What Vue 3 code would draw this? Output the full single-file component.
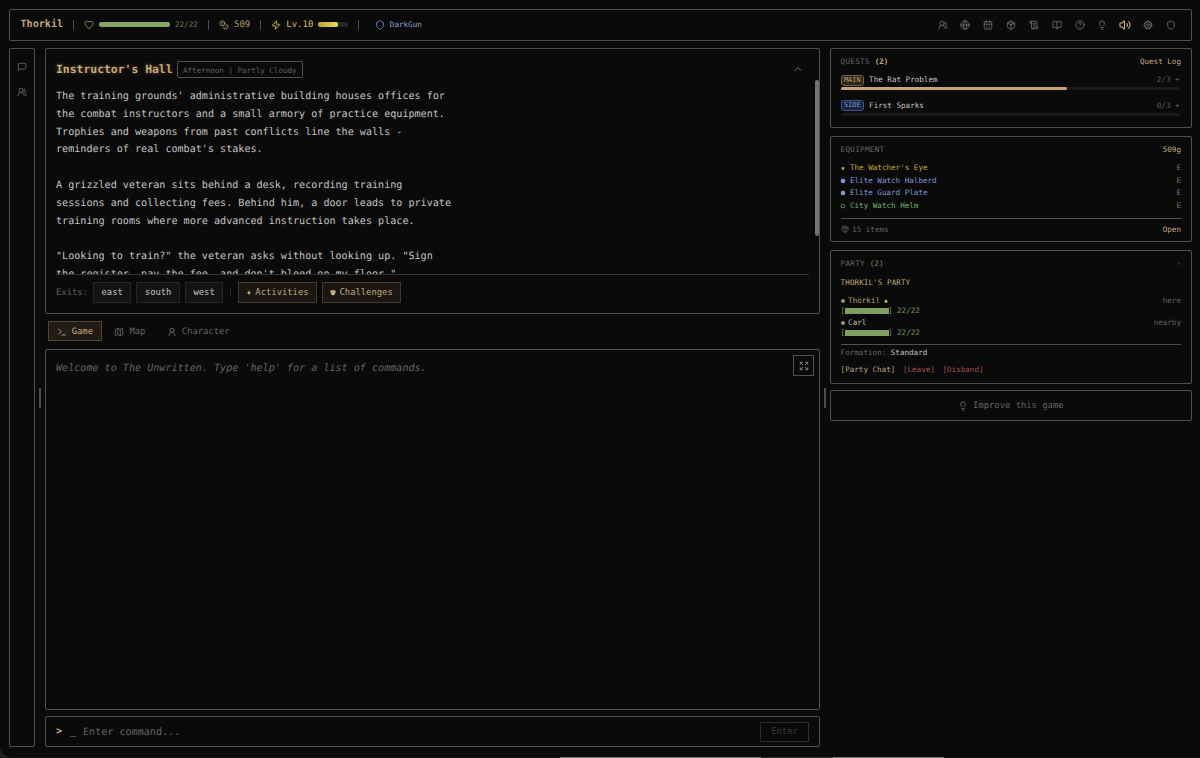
<template>
  <div class="screen">
    <div class="game">
      <!-- TOP BAR -->
      <header class="panel topbar">
        <span class="player">Thorkil</span>
        <span class="sep"></span>
        <svg class="icon hp" viewBox="0 0 24 24" v-html="icons.heart"></svg>
        <div class="hp-track"></div>
        <span class="hp-text">22/22</span>
        <span class="sep"></span>
        <svg class="icon coins" viewBox="0 0 24 24" v-html="icons.coins"></svg>
        <span class="gold">509</span>
        <span class="sep"></span>
        <svg class="icon zap" viewBox="0 0 24 24" v-html="icons.zap"></svg>
        <span class="level">Lv.10</span>
        <div class="xp-track"><div class="xp-fill" :style="{ width: xp + '%' }"></div></div>
        <span class="sep"></span>
        <svg class="icon guild" viewBox="0 0 24 24" v-html="icons.shield"></svg>
        <span class="guild-name">DarkGun</span>

        <nav class="toolbar">
          <svg
            v-for="name in toolbar"
            :key="name"
            class="icon"
            :class="{ lit: name === 'volume' }"
            viewBox="0 0 24 24"
            v-html="icons[name]"
          ></svg>
        </nav>
      </header>

      <div class="columns">
        <!-- SIDE RAIL -->
        <aside class="panel rail">
          <svg class="icon" viewBox="0 0 24 24" v-html="icons.message"></svg>
          <svg class="icon" viewBox="0 0 24 24" v-html="icons.users"></svg>
        </aside>
        <div class="handle"></div>

        <!-- MAIN -->
        <main class="main">
          <section class="panel room">
            <div class="room-head">
              <h1>Instructor's Hall</h1>
              <span class="weather">Afternoon | Partly Cloudy</span>
              <svg class="icon chevron" viewBox="0 0 24 24" v-html="icons.chevron"></svg>
            </div>
            <div class="description">{{ description }}</div>
            <div class="scroll-thumb"></div>
            <div class="exits">
              <span class="exits-label">Exits:</span>
              <button v-for="exit in exits" :key="exit" class="btn">{{ exit }}</button>
              <span class="exits-sep"></span>
              <button class="btn gold-btn">
                <svg class="mark" viewBox="0 0 6 8"><path d="M3 2.3 3.8 4 5.200 4.800 3.800 5.600 3 7.200 2.200 5.600.8 4.800 2.200 4z" /></svg>Activities
              </button>
              <button class="btn gold-btn">
                <svg class="mark" viewBox="0 0 6 8"><path d="M.5 2.200h5v2.600Q5.300 6.800 3 7.600.7 6.800.5 4.800z" /></svg>Challenges
              </button>
            </div>
          </section>

          <div class="tabs">
            <a
              v-for="tab in tabs"
              :key="tab.name"
              class="tab"
              :class="{ active: activeTab === tab.name }"
              @click="activeTab = tab.name"
            >
              <svg class="icon" viewBox="0 0 24 24" v-html="icons[tab.icon]"></svg>
              {{ tab.name }}
            </a>
          </div>

          <section class="panel log">
            <p>Welcome to The Unwritten. Type 'help' for a list of commands.</p>
            <button class="expand">
              <svg class="icon" viewBox="0 0 24 24" v-html="icons.expand"></svg>
            </button>
          </section>

          <section class="panel command">
            <span class="prompt">&gt;</span>
            <span class="cursor">_</span>
            <span class="placeholder">Enter command...</span>
            <button class="enter">Enter</button>
          </section>
        </main>
        <div class="handle right"></div>

        <!-- RIGHT COLUMN -->
        <div class="side">
          <section class="panel quests">
            <div class="head">
              <span class="label">QUESTS <b>(2)</b></span>
              <span class="link">Quest Log</span>
            </div>
            <div v-for="quest in quests" :key="quest.name" class="quest">
              <div class="quest-row">
                <span class="tag" :class="quest.type">{{ quest.type.toUpperCase() }}</span>
                <span class="quest-name">{{ quest.name }}</span>
                <span class="quest-count">{{ quest.done }}/{{ quest.total }} +</span>
              </div>
              <div class="quest-track">
                <div class="quest-fill" :style="{ width: (quest.done / quest.total) * 100 + '%' }"></div>
              </div>
            </div>
          </section>

          <section class="panel equipment">
            <div class="head">
              <span class="label">EQUIPMENT</span>
              <span class="link">509g</span>
            </div>
            <div v-for="item in items" :key="item.name" class="item" :class="item.rarity">
              <svg class="bullet" viewBox="0 0 6 6" v-html="bullets[item.rarity]"></svg>
              <span>{{ item.name }}</span>
              <span class="equipped">E</span>
            </div>
            <div class="bag">
              <svg class="icon" viewBox="0 0 24 24" v-html="icons.package"></svg>
              <span>15 items</span>
              <span class="link">Open</span>
            </div>
          </section>

          <section class="panel party">
            <div class="head">
              <span class="label">PARTY <b>(2)</b></span>
              <span class="minus">-</span>
            </div>
            <div class="party-title">THORKIL'S PARTY</div>
            <div v-for="member in members" :key="member.name" class="member">
              <div class="member-row">
                <span class="dot"></span>
                <span :class="{ leader: member.leader }">{{ member.name }}</span>
                <svg v-if="member.leader" class="star" viewBox="0 0 6 6" v-html="bullets.legendary"></svg>
                <span class="where">{{ member.where }}</span>
              </div>
              <div class="member-hp">[<i></i>]<span>22/22</span></div>
            </div>
            <div class="formation">Formation: <span>Standard</span></div>
            <div class="actions">
              <a>[Party Chat]</a>
              <a class="danger">[Leave]</a>
              <a class="danger">[Disband]</a>
            </div>
          </section>

          <section class="panel improve">
            <svg class="icon" viewBox="0 0 24 24" v-html="icons.bulb"></svg>
            <span>Improve this game</span>
          </section>
        </div>
      </div>
    </div>
    <div class="dock"></div>
  </div>
</template>

<script setup>
import { ref } from 'vue'

const xp = 64
const activeTab = ref('Game')
const exits = ['east', 'south', 'west']

const description = `The training grounds' administrative building houses offices for
the combat instructors and a small armory of practice equipment.
Trophies and weapons from past conflicts line the walls -
reminders of real combat's stakes.

A grizzled veteran sits behind a desk, recording training
sessions and collecting fees. Behind him, a door leads to private
training rooms where more advanced instruction takes place.

"Looking to train?" the veteran asks without looking up. "Sign
the register, pay the fee, and don't bleed on my floor."`

const tabs = [
  { name: 'Game', icon: 'terminal' },
  { name: 'Map', icon: 'map' },
  { name: 'Character', icon: 'user' }
]

const toolbar = ['users', 'globe', 'calendar', 'package', 'scroll', 'book', 'help', 'bulb', 'volume', 'settings', 'shield']

const quests = [
  { type: 'main', name: 'The Rat Problem', done: 2, total: 3 },
  { type: 'side', name: 'First Sparks', done: 0, total: 3 }
]

const items = [
  { name: "The Watcher's Eye", rarity: 'legendary' },
  { name: 'Elite Watch Halberd', rarity: 'rare' },
  { name: 'Elite Guard Plate', rarity: 'rare' },
  { name: 'City Watch Helm', rarity: 'uncommon' }
]

const members = [
  { name: 'Thorkil', leader: true, where: 'here' },
  { name: 'Carl', leader: false, where: 'nearby' }
]

const bullets = {
  legendary: '<path fill="currentColor" d="M3 1.2 3.600 2.500 5 2.700 4 3.700 4.200 5.100 3 4.400 1.800 5.100 2 3.700 1 2.700 2.400 2.500z"/>',
  rare: '<circle cx="3" cy="3" r="2.300" fill="currentColor"/>',
  uncommon: '<circle cx="3" cy="3" r="1.900" fill="none" stroke="currentColor" stroke-width=".7"/>'
}

const icons = {
  heart: '<path d="M19 14c1.490-1.460 3-3.210 3-5.500A5.500 5.500 0 0 0 16.500 3c-1.760 0-3 .5-4.500 2-1.500-1.500-2.740-2-4.500-2A5.500 5.500 0 0 0 2 8.500c0 2.300 1.500 4.050 3 5.500l7 7z"/>',
  coins: '<circle cx="8" cy="8" r="6"/><path d="M18.090 10.370A6 6 0 1 1 10.340 18M7 6h1v4M16.710 13.880l.7.710-2.820 2.820"/>',
  zap: '<path d="M4 14a1 1 0 0 1-.78-1.630l9.900-10.200a.5.5 0 0 1 .86.460l-1.920 6.020A1 1 0 0 0 13 10h7a1 1 0 0 1 .78 1.630l-9.900 10.200a.5.5 0 0 1-.86-.460l1.920-6.020A1 1 0 0 0 11 14z"/>',
  shield: '<path d="M20 13c0 5-3.500 7.500-7.660 8.950a1 1 0 0 1-.67-.010C7.500 20.500 4 18 4 13V6a1 1 0 0 1 1-1c2 0 4.500-1.200 6.240-2.720a1.170 1.170 0 0 1 1.520 0C14.510 3.810 17 5 19 5a1 1 0 0 1 1 1z"/>',
  users: '<path d="M18 21a8 8 0 0 0-16 0"/><circle cx="10" cy="8" r="5"/><path d="M22 20c0-3.370-2-6.500-4-8a5 5 0 0 0-.45-8.300"/>',
  globe: '<circle cx="12" cy="12" r="10"/><path d="M12 2a14.500 14.500 0 0 0 0 20 14.500 14.500 0 0 0 0-20M2 12h20"/>',
  calendar: '<path d="M8 2v4M16 2v4M3 10h18M8 14h.01M12 14h.01M16 14h.01M8 18h.01M12 18h.01M16 18h.01"/><rect width="18" height="18" x="3" y="4" rx="2"/>',
  package: '<path d="M11 21.730a2 2 0 0 0 2 0l7-4A2 2 0 0 0 21 16V8a2 2 0 0 0-1-1.730l-7-4a2 2 0 0 0-2 0l-7 4A2 2 0 0 0 3 8v8a2 2 0 0 0 1 1.730zM12 22V12M3.300 7l8.700 5 8.700-5M7.500 4.270l9 5.150"/>',
  scroll: '<path d="M15 12h-5M15 8h-5M19 17V5a2 2 0 0 0-2-2H4"/><path d="M8 21h12a2 2 0 0 0 2-2v-1a1 1 0 0 0-1-1H11a1 1 0 0 0-1 1v1a2 2 0 1 1-4 0V5a2 2 0 1 0-4 0v2a1 1 0 0 0 1 1h3"/>',
  book: '<path d="M12 7v14M3 18a1 1 0 0 1-1-1V4a1 1 0 0 1 1-1h5a4 4 0 0 1 4 4 4 4 0 0 1 4-4h5a1 1 0 0 1 1 1v13a1 1 0 0 1-1 1h-6a3 3 0 0 0-3 3 3 3 0 0 0-3-3z"/>',
  help: '<circle cx="12" cy="12" r="10"/><path d="M9.090 9a3 3 0 0 1 5.830 1c0 2-3 3-3 3M12 17h.01"/>',
  bulb: '<path d="M15 14c.2-1 .7-1.700 1.500-2.500 1-.9 1.500-2.200 1.500-3.500A6 6 0 0 0 6 8c0 1 .2 2.200 1.500 3.500.7.7 1.300 1.500 1.500 2.500M9 18h6M10 22h4"/>',
  volume: '<path d="M11 4.700a.7.7 0 0 0-1.200-.5L6.410 7.590A1.400 1.400 0 0 1 5.420 8H3a1 1 0 0 0-1 1v6a1 1 0 0 0 1 1h2.420a1.400 1.400 0 0 1 .99.410l3.390 3.390a.7.7 0 0 0 1.200-.5zM16 9a5 5 0 0 1 0 6M19.360 18.360a9 9 0 0 0 0-12.730"/>',
  settings: '<circle cx="12" cy="12" r="8"/><circle cx="12" cy="12" r="3"/><path d="M12 2v2M12 20v2M2 12h2M20 12h2M5 5l1.400 1.400M17.600 17.600 19 19M5 19l1.400-1.400M17.600 6.400 19 5M8.200 2.800l.8 1.700M15 19.500l.8 1.700M2.800 15.800l1.700-.8M19.500 9l1.700-.8M2.800 8.200l1.700.8M19.500 15l1.700.8M8.200 21.200l.8-1.700M15 4.500l.8-1.700"/>',
  message: '<path d="M21 15a2 2 0 0 1-2 2H7l-4 4V5a2 2 0 0 1 2-2h14a2 2 0 0 1 2 2z"/>',
  chevron: '<path d="m5 15.500 7-7 7 7"/>',
  terminal: '<path d="m4 17 6-6-6-6M12 19h8"/>',
  map: '<path d="M14.110 5.550a2 2 0 0 0 1.780 0l3.660-1.830A1 1 0 0 1 21 4.620v12.760a1 1 0 0 1-.55.9l-4.560 2.270a2 2 0 0 1-1.780 0l-4.220-2.110a2 2 0 0 0-1.780 0l-3.660 1.830A1 1 0 0 1 3 19.380V6.620a1 1 0 0 1 .55-.9l4.560-2.270a2 2 0 0 1 1.780 0zM15 5.760v15M9 3.240v15"/>',
  user: '<circle cx="12" cy="8" r="5"/><path d="M19 21v-1a7 7 0 0 0-14 0v1"/>',
  expand: '<path d="m15 15 6 6M15 9l6-6M21 16v5h-5M21 8V3h-5M3 16v5h5M3 21l6-6M3 8V3h5M9 9 3 3"/>'
}
</script>

<style>
body {
  margin: 0;
  background: #24211f;
  overflow: hidden;
}
</style>

<style scoped>
* {
  box-sizing: border-box;
}

.screen {
  height: 758px;
  font-family: 'DejaVu Sans Mono', 'Liberation Mono', monospace;
  font-size: 7.58px;
  line-height: 12px;
  color: #c4c4c4;
  white-space: nowrap;
  text-rendering: geometricPrecision;
}

.game {
  height: 757px;
  padding: 9px 8px 10px 9px;
  display: flex;
  flex-direction: column;
  gap: 7px;
  background: #0a0a0a;
  border-bottom-left-radius: 11px;
}

/* strip of whatever sits under the window */
.dock {
  height: 1px;
  background: linear-gradient(90deg, #171412 560px, #777 560px 761px, #333 761px 833px, #777 833px 944px, #1b1715 944px);
}

.panel {
  border: 1px solid #505050;
  border-radius: 2px;
}

.icon {
  width: 10px;
  height: 10px;
  flex: none;
  fill: none;
  stroke: currentColor;
  stroke-width: 2.2;
  stroke-linecap: round;
  stroke-linejoin: round;
}

button {
  font: inherit;
  color: inherit;
  background: none;
  padding: 0;
  margin: 0;
}

/* TOP BAR */
.topbar {
  height: 32px;
  flex: none;
  display: flex;
  align-items: center;
  padding: 0 15px 1px 10.500px;
}

.player {
  width: 42.500px;
  padding-top: 1px;
  font-size: 10.100px;
  font-weight: bold;
  color: #c4a77a;
}

.sep {
  width: 1px;
  height: 10px;
  margin: 0 10px;
  background: #4b4b4b;
}

.hp {
  color: #7d9b60;
}

.hp-track {
  width: 71px;
  height: 5px;
  margin: 0 5px;
  border-radius: 2px;
  background: #86a566;
}

.hp-text {
  width: 23px;
  padding-top: 1px;
  color: #6b8056;
}

.coins {
  color: #a98f68;
}

.gold,
.level {
  margin-left: 5px;
  font-size: 9px;
  color: #b0966c;
}

.zap,
.level {
  color: #d2bd4a;
}

.xp-track {
  width: 30px;
  height: 5px;
  margin-left: 5px;
  border-radius: 2px;
  background: #262626;
}

.xp-fill {
  height: 100%;
  border-radius: 2px;
  background: linear-gradient(90deg, #bda02f, #efd75c);
}

.guild {
  margin-left: 5.500px;
  color: #7088c8;
}

.guild-name {
  margin-left: 5px;
  padding-top: 1px;
  color: #8ea0d4;
}

.toolbar {
  margin-left: auto;
  display: flex;
  gap: 12.850px;
  color: #6a6a6a;
}

.toolbar .lit {
  color: #d0b27e;
  width: 12px;
  height: 12px;
  margin: -1px;
}

/* COLUMNS */
.columns {
  flex: 1;
  min-height: 0;
  display: flex;
}

.rail {
  width: 26px;
  padding-top: 13px;
  display: flex;
  flex-direction: column;
  align-items: center;
  gap: 15px;
  color: #646464;
}

.handle {
  width: 2px;
  height: 20px;
  margin: 340px 4px 0;
  background: #4c4c4c;
}

.main {
  width: 775px;
  display: flex;
  flex-direction: column;
}

/* ROOM */
.room {
  position: relative;
  height: 266px;
  flex: none;
  padding: 0 10px;
}

.room-head {
  display: flex;
  align-items: center;
  height: 31px;
  padding-top: 9px;
}

h1 {
  margin: 0;
  width: 121px;
  font-size: 11.400px;
  line-height: 18px;
  color: #c8ab7b;
  text-shadow: 0 0 5px rgba(212, 165, 90, 0.4);
}

.weather {
  height: 17px;
  padding: 1px 5px 0;
  line-height: 15px;
  letter-spacing: -0.020px;
  color: #606060;
  border: 1px solid #505050;
  border-radius: 2px;
}

.chevron {
  margin-left: auto;
  margin-right: 6px;
  color: #777;
}

.description {
  height: 195px;
  padding-top: 8.200px;
  overflow: hidden;
  white-space: pre;
  font-size: 10.100px;
  line-height: 17.760px;
  border-bottom: 1px solid #353535;
}

.scroll-thumb {
  position: absolute;
  top: 31px;
  right: 0;
  width: 4px;
  height: 156px;
  border-radius: 2px;
  background: #737373;
}

.exits {
  display: flex;
  align-items: center;
  gap: 5px;
  padding-top: 7px;
  font-size: 8.850px;
}

.exits-label {
  width: 32px;
  color: #606060;
}

.btn {
  height: 21px;
  padding: 0 7.500px 1px;
  display: flex;
  align-items: center;
  color: #c4c4c4;
  background: #131313;
  border: 1px solid #262626;
}

.exits-sep {
  width: 1px;
  height: 9px;
  margin: 0 2px 0 1.500px;
  background: #252525;
}

.gold-btn {
  padding: 0 7.300px 1px;
  color: #c4a87e;
  background: #1a1611;
  border-color: #453925;
}

.mark {
  width: 6px;
  height: 8px;
  margin-right: 3.300px;
  fill: #c6aa80;
}

/* TABS */
.tabs {
  display: flex;
  height: 35px;
  flex: none;
  padding: 7px 3px 0;
  gap: 4px;
  font-size: 8.850px;
  color: #646464;
}

.tab {
  display: flex;
  align-items: center;
  gap: 5px;
  height: 20px;
  padding: 1px 7.700px 0;
  border: 1px solid transparent;
}

.tab.active {
  color: #c4a87e;
  background: #211c15;
  border-color: #54452e;
}

/* LOG */
.log {
  height: 361px;
  flex: none;
  display: flex;
  justify-content: space-between;
  padding: 5px 5px 0 10px;
}

.log p {
  margin: 5px 0 0;
  font-size: 10.100px;
  font-style: italic;
  line-height: 17px;
  color: #646464;
}

.expand {
  width: 21px;
  height: 21px;
  display: flex;
  align-items: center;
  justify-content: center;
  border: 1px solid #525252;
  color: #858585;
}

/* COMMAND */
.command {
  height: 31px;
  margin-top: 6px;
  display: flex;
  align-items: center;
  padding: 1px 10px 0;
  font-size: 10.100px;
}

.prompt {
  width: 14px;
  font-weight: bold;
  color: #c8ab7b;
}

.cursor {
  width: 13px;
  color: #aaa;
}

.placeholder {
  padding-top: 1px;
  color: #646464;
}

.enter {
  width: 49px;
  height: 20px;
  margin-left: auto;
  padding-bottom: 2px;
  font-size: 8.850px;
  color: #3b3b3b;
  border: 1px solid #2c2c2c;
}

/* RIGHT COLUMN */
.side {
  flex: 1;
  display: flex;
  flex-direction: column;
}

.side .panel {
  padding: 0 10px 0 9.600px;
}

.head {
  display: flex;
  justify-content: space-between;
  height: 12px;
}

.label {
  letter-spacing: 0.300px;
  color: #686868;
}

.label b {
  letter-spacing: 0;
  color: #c4a87e;
}

.link {
  color: #c4a87e;
}

.side .quests {
  height: 80px;
  padding-top: 7px;
}

.quests .head {
  margin-bottom: 6px;
}

.quest {
  width: 339px;
  height: 25.500px;
}

.quest-row {
  display: flex;
  align-items: center;
  height: 12px;
}

.tag {
  width: 23.500px;
  height: 11px;
  margin-right: 5px;
  font-size: 7px;
  line-height: 9px;
  text-align: center;
  border-radius: 3px;
}

.tag.main {
  display: block;
  color: #b69c73;
  background: #302718;
  border: 1px solid #72613f;
}

.tag.side {
  flex: none;
  display: block;
  color: #7f96d0;
  background: #182341;
  border: 1px solid #3f5690;
}

.quest-count {
  margin-left: auto;
  color: #5d5d5d;
}

.quest-track {
  height: 3px;
  margin-top: 1px;
  border-radius: 2px;
  background: #1b1b1b;
}

.quest-fill {
  height: 100%;
  border-radius: 2px;
  background: #c4a67a;
}

.side .equipment {
  height: 106px;
  margin-top: 8px;
  padding-top: 7px;
}

.equipment .head {
  margin-bottom: 6px;
}

.item {
  height: 12.600px;
  display: flex;
  align-items: center;
}

.bullet {
  width: 6px;
  height: 6px;
  margin-left: -0.800px;
  margin-right: 4.200px;
}

.legendary {
  color: #c4a83c;
}

.rare {
  color: #7f97d8;
}

.uncommon {
  color: #74b46e;
}

.equipped {
  margin-left: auto;
  color: #64804f;
}

.bag {
  display: flex;
  align-items: center;
  height: 22px;
  margin-top: 6px;
  color: #646464;
  border-top: 1px solid #505050;
}

.bag .icon {
  width: 8px;
  height: 8px;
  margin-right: 3.500px;
  margin-bottom: 2px;
}

.bag .link {
  margin-left: auto;
}

.side .party {
  height: 134px;
  margin-top: 8px;
  padding-top: 7px;
}

.party .label b {
  font-weight: normal;
  color: #7b965f;
}

.minus {
  color: #777;
}

.party-title {
  margin: 7px 0 7px;
  letter-spacing: 0.080px;
  color: #c4a87e;
}

.member {
  height: 22.200px;
}

.member-row {
  display: flex;
  align-items: center;
  height: 10px;
}

.dot {
  width: 4px;
  height: 4px;
  margin-right: 3.500px;
  border-radius: 50%;
  background: #86a566;
}

.leader {
  color: #b69c73;
}

.star {
  width: 6px;
  height: 6px;
  margin-left: 3px;
  color: #e0c650;
}

.where {
  margin-left: auto;
  color: #606060;
}

.member-hp {
  display: flex;
  align-items: center;
  height: 9px;
  color: #7b965f;
}

.member-hp i {
  width: 44px;
  height: 6px;
  margin: 0 -0.600px;
  background: #809d62;
}

.member-hp span {
  margin-left: 4.500px;
}

.formation {
  height: 17px;
  margin-top: 3.600px;
  padding-top: 2px;
  color: #646464;
  border-top: 1px solid #505050;
}

.formation span {
  color: #c4c4c4;
}

.actions {
  display: flex;
  gap: 7.600px;
  margin-top: 3px;
  color: #bda27a;
}

.danger {
  color: #a05050;
}

.improve {
  height: 31px;
  margin-top: 6px;
  display: flex;
  align-items: center;
  justify-content: center;
  gap: 5px;
  font-size: 8.850px;
  color: #646464;
}
</style>
